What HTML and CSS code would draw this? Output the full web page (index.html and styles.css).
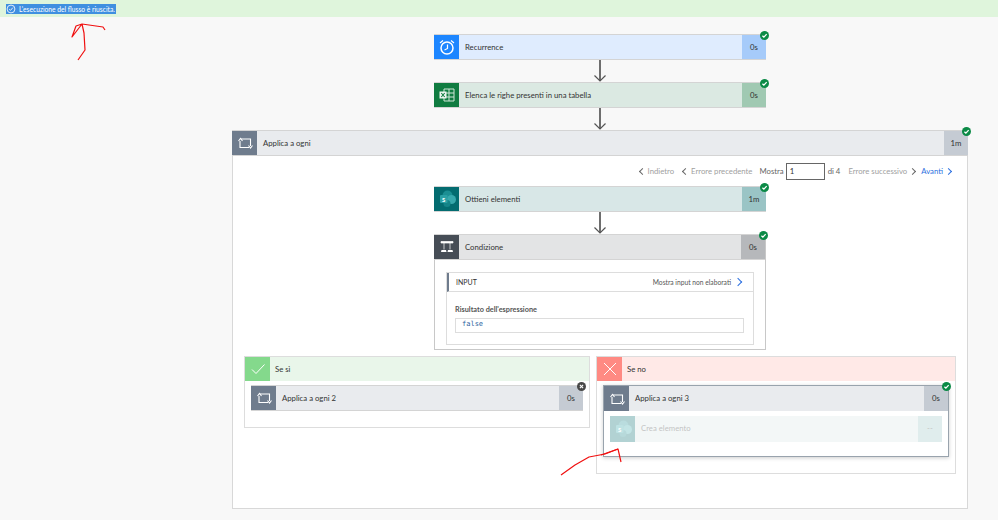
FILE: index.html
```html
<!DOCTYPE html>
<html lang="en">
<head>
<meta charset="UTF-8">
<meta name="viewport" content="width=device-width, initial-scale=1.0">
<title>Esecuzione del flusso</title>
<link rel="stylesheet" href="styles.css">
</head>
<body>
<svg class="defs" width="0" height="0">
  <symbol id="ok" viewBox="0 0 10 10"><circle cx="5" cy="5" r="5" fill="#0b8a46"/><path d="M2.700 5.200 4.300 6.800 7.400 3.400" fill="none" stroke="#fff" stroke-width="1.400"/></symbol>
  <symbol id="loop" viewBox="0 0 24 24"><path d="M8 8H17.500V15M16 16.500H7V10" fill="none" stroke="#fff" stroke-width="1.100"/><path d="M5.500 10 7.500 7.500 9.500 10M15.500 14.500 17.500 17 19.500 14.500" fill="none" stroke="#fff" stroke-width="1.100"/></symbol>
  <symbol id="sp" viewBox="0 0 24 24"><circle cx="12.500" cy="8.500" r="5" fill="#1b8f93"/><circle cx="16.500" cy="12.500" r="4.500" fill="#37a8ac"/><circle cx="12" cy="16.500" r="3.500" fill="#148488"/><rect x="5" y="8" width="7.500" height="8" rx="1" fill="#2aa0a4"/></symbol>
  <symbol id="down" viewBox="0 0 14 22"><path d="M7 0V21" stroke="#6e6e6e" stroke-width="2" fill="none"/><path d="M1.500 15.500 7 21 12.500 15.500" stroke="#555" stroke-width="1.200" fill="none"/></symbol>
</svg>

<div class="banner">
  <span class="selected">
    <svg class="banner-ico" viewBox="0 0 12 12"><circle cx="6" cy="6" r="4.700" fill="none" stroke="#fff" stroke-width="1"/><path d="M3.800 6.200 5.400 7.600 8.200 4.400" fill="none" stroke="#fff" stroke-width="1"/></svg>
    L'esecuzione del flusso è riuscita.
  </span>
</div>

<div class="flow">
  <div class="card card-blue">
    <div class="ico">
      <svg viewBox="0 0 24 24"><circle cx="12" cy="13" r="6" fill="none" stroke="#fff" stroke-width="1.500"/><path d="M12.500 9.500V13.500L9.500 15M5 8 8 5.500M19 8 16 5.500" fill="none" stroke="#fff" stroke-width="1.200"/></svg>
    </div>
    <div class="name">Recurrence</div>
    <div class="time">0s</div>
    <svg class="badge"><use href="#ok"/></svg>
  </div>
  <svg class="arrow"><use href="#down"/></svg>

  <div class="card card-green">
    <div class="ico">
      <svg viewBox="0 0 24 24"><path d="M9 6H19V18H9Z M9 10H19M9 14H19M14 6V18" fill="none" stroke="#cfe6d8" stroke-width="1"/><rect x="4.500" y="8.500" width="7" height="7" fill="#eef6f1"/><path d="M6.300 10 9.700 14M9.700 10 6.300 14" stroke="#107c41" stroke-width="1.100"/></svg>
    </div>
    <div class="name">Elenca le righe presenti in una tabella</div>
    <div class="time">0s</div>
    <svg class="badge"><use href="#ok"/></svg>
  </div>
  <svg class="arrow"><use href="#down"/></svg>

  <div class="scope">
    <div class="card card-grey card-wide">
      <div class="ico"><svg viewBox="0 0 24 24"><use href="#loop"/></svg></div>
      <div class="name">Applica a ogni</div>
      <div class="time">1m</div>
      <svg class="badge"><use href="#ok"/></svg>
    </div>

    <div class="pager">
      <span class="pg pg-back"><i class="chev chev-l"></i>Indietro</span>
      <span class="pg pg-prev"><i class="chev chev-l"></i>Errore precedente</span>
      <span class="pg-show">Mostra</span>
      <input class="pg-input" type="text" value="1">
      <span class="pg-show">di 4</span>
      <span class="pg pg-succ">Errore successivo<i class="chev chev-r"></i></span>
      <span class="pg pg-next">Avanti<i class="chev chev-r chev-blue"></i></span>
    </div>

    <div class="card card-teal">
      <div class="ico"><svg viewBox="0 0 24 24"><use href="#sp"/><text x="8.700" y="14.500" class="sp-s">S</text></svg></div>
      <div class="name">Ottieni elementi</div>
      <div class="time">1m</div>
      <svg class="badge"><use href="#ok"/></svg>
    </div>
    <svg class="arrow"><use href="#down"/></svg>

    <div class="cond">
      <div class="card card-dark">
        <div class="ico">
          <svg viewBox="0 0 24 24"><path d="M6 6.500H18V8H6ZM9 8V14.500M15 8V14.500" fill="#fff" stroke="#fff" stroke-width=".7"/><path d="M6.500 15H11L11.500 17H6ZM13 15H17.500L18 17H12.500Z" fill="#fff"/></svg>
        </div>
        <div class="name">Condizione</div>
        <div class="time">0s</div>
        <svg class="badge"><use href="#ok"/></svg>
      </div>
      <div class="input-box">
        <div class="input-head">
          <span>INPUT</span>
          <span class="raw">Mostra input non elaborati<i class="chev chev-r chev-blue chev-big"></i></span>
        </div>
        <div class="input-body">
          <div class="result-label">Risultato dell'espressione</div>
          <div class="result-value">false</div>
        </div>
      </div>
    </div>

    <div class="branches">
      <div class="branch branch-yes">
        <div class="branch-head">
          <div class="ico"><svg viewBox="0 0 24 24"><path d="M6 12.500 10 16.500 18.500 7.500" fill="none" stroke="#fff" stroke-width="1"/></svg></div>
          <div class="name">Se sì</div>
        </div>
        <div class="card card-grey">
          <div class="ico"><svg viewBox="0 0 24 24"><use href="#loop"/></svg></div>
          <div class="name">Applica a ogni 2</div>
          <div class="time">0s</div>
          <svg class="badge" viewBox="0 0 10 10"><circle cx="5" cy="5" r="5" fill="#484848"/><path d="M3.200 3.200 6.800 6.800M6.800 3.200 3.200 6.800" stroke="#fff" stroke-width="1.200"/></svg>
        </div>
      </div>

      <div class="branch branch-no">
        <div class="branch-head">
          <div class="ico"><svg viewBox="0 0 24 24"><path d="M6 6 18 18M18 6 6 18" fill="none" stroke="#fff" stroke-width="1"/></svg></div>
          <div class="name">Se no</div>
        </div>
        <div class="loop3">
          <div class="card card-grey">
            <div class="ico"><svg viewBox="0 0 24 24"><use href="#loop"/></svg></div>
            <div class="name">Applica a ogni 3</div>
            <div class="time">0s</div>
            <svg class="badge"><use href="#ok"/></svg>
          </div>
          <div class="card card-teal card-faded">
            <div class="ico"><svg viewBox="0 0 24 24"><use href="#sp"/><text x="8.700" y="14.500" class="sp-s">S</text></svg></div>
            <div class="name">Crea elemento</div>
            <div class="time">--</div>
          </div>
        </div>
      </div>
    </div>
  </div>
</div>

<!-- red marks drawn on the screenshot -->
<svg class="marks" viewBox="0 0 998 520">
  <path d="M78 60 85 50 84 33 82 24 76 26 72 37 82 24 103 27 105 30" />
  <path d="M561 475 575 465 589 457 605 454 618 449 621 462" />
  <path d="M601 455 618 449" />
</svg>
</body>
</html>
```

FILE: styles.css
```css
* {
  box-sizing: border-box;
}
body {
  margin: 0;
  width: 998px;
  height: 520px;
  overflow: hidden;
  background-color: #f8f8f8;
  font-family: Lato, Arial, sans-serif;
  font-size: 7.750px;
  color: #333;
}
.defs {
  display: block;
  height: 0;
}
.sp-s {
  font-family: Lato, sans-serif;
  font-size: 6px;
  font-weight: 700;
  fill: #fff;
  text-anchor: middle;
}

.banner {
  height: 17px;
  padding: 4px 0 0 6px;
  background-color: #dff5dc;
}
.selected {
  display: inline-flex;
  align-items: center;
  gap: 3px;
  height: 10px;
  padding-right: 1px;
  background-color: #3f8fe0;
  color: #fff;
  font-size: 6.700px;
  line-height: 10px;
  white-space: nowrap;
  vertical-align: top;
}
.banner-ico {
  width: 10px;
  height: 10px;
  flex: none;
}

.flow {
  display: flex;
  flex-direction: column;
  align-items: center;
  width: 736px;
  margin: 17px 0 0 232px;
}

.card {
  position: relative;
  display: flex;
  align-items: stretch;
  flex: none;
  width: 332px;
  height: 26px;
  border: 1px solid #d4d4d4;
  border-left: 0;
  border-right: 0;
}
.ico {
  display: flex;
  align-items: center;
  justify-content: center;
  flex: none;
  width: 25px;
}
.ico svg {
  width: 24px;
  height: 24px;
}
.name {
  flex: 1;
  padding-left: 6px;
  line-height: 24px;
  white-space: nowrap;
}
.time {
  flex: none;
  width: 24px;
  line-height: 24px;
  text-align: center;
}
.badge {
  position: absolute;
  top: -4px;
  right: -3px;
  width: 9px;
  height: 9px;
}

.card-blue { background-color: #dfecfe; }
.card-blue .ico { background-color: #1d86ff; }
.card-blue .time { background-color: #a6cbfa; }
.card-green { background-color: #dbe9e2; }
.card-green .ico { background-color: #107c41; }
.card-green .time { background-color: #a0c9b2; }
.card-grey { background-color: #e9ebee; }
.card-grey .ico { background-color: #6f7c8d; }
.card-grey .time { background-color: #c5cbd3; }
.card-teal { background-color: #d8e7e7; }
.card-teal .ico { background-color: #036c70; }
.card-teal .time { background-color: #9ac4c5; }
.card-dark { background-color: #e3e4e5; }
.card-dark .ico { background-color: #464d56; }
.card-dark .time { background-color: #b6b8bb; }

.arrow {
  display: block;
  flex: none;
  width: 14px;
  height: 22px;
}

.scope {
  display: flex;
  flex-direction: column;
  align-items: center;
  width: 736px;
  height: 379px;
  background-color: #fff;
  border: 1px solid #d8d8d8;
  border-top: 0;
}
.card-wide {
  width: 736px;
  margin: 0 -1px;
}
.pager {
  display: flex;
  align-items: center;
  justify-content: flex-end;
  width: 100%;
  height: 30px;
  padding-right: 14px;
  color: #a0a0a0;
}
.pg {
  display: flex;
  align-items: center;
  gap: 3px;
}
.pg-back { margin-right: 7px; }
.pg-prev { margin-right: 7px; }
.pg-succ { margin: 0 4px 0 8px; }
.pg-show {
  color: #666;
}
.pg-input {
  width: 39px;
  height: 17px;
  margin: 0 3px 0 2px;
  padding: 0 3px;
  border: 1px solid #666;
  font: inherit;
  color: #333;
}
.pg-next {
  color: #2b6fe0;
}
.chev {
  display: inline-block;
  width: 5px;
  height: 5px;
  border-top: 1.200px solid #666;
  border-left: 1.200px solid #666;
}
.chev-l {
  transform: rotate(-45deg);
  margin-left: 2px;
}
.chev-r {
  transform: rotate(135deg);
  margin-right: 2px;
}
.chev-blue {
  border-color: #2b6fe0;
}
.chev-big {
  width: 6px;
  height: 6px;
  margin: 0 12px 0 4px;
}

.cond {
  flex: none;
  width: 332px;
  height: 116px;
  background-color: #fff;
  border: 1px solid #c8c8c8;
  border-top: 0;
}
.cond .card {
  width: 331px;
  margin: 0 -1px 0 -1px;
}
.input-box {
  width: 308px;
  height: 73px;
  margin: 12px 0 0 11px;
  border: 1px solid #ddd;
}
.input-head {
  display: flex;
  align-items: center;
  justify-content: space-between;
  height: 19px;
  padding-left: 7px;
  border-left: 2px solid #6f7c8d;
  border-bottom: 1px solid #ddd;
  font-size: 7px;
}
.raw {
  display: flex;
  align-items: center;
  font-size: 6.700px;
  color: #555;
}
.input-body {
  padding: 12px 9px 0 8px;
}
.result-label {
  font-size: 7.300px;
  font-weight: 700;
  color: #555;
  line-height: 11px;
}
.result-value {
  height: 15px;
  margin-top: 3px;
  padding: 1px 0 0 6px;
  border: 1px solid #ddd;
  font-family: "DejaVu Sans Mono", monospace;
  font-size: 7px;
  line-height: 9px;
  color: #2b5f9e;
}

.branches {
  display: flex;
  align-items: flex-start;
  gap: 6px;
  width: 100%;
  padding-left: 11px;
  margin-top: 6px;
}
.branch {
  flex: none;
  background-color: #fff;
  border: 1px solid #ddd;
}
.branch-yes {
  width: 346px;
  height: 72px;
}
.branch-no {
  width: 360px;
  height: 118px;
}
.branch-head {
  display: flex;
  height: 24px;
}
.branch-yes .branch-head { background-color: #e9f6ea; }
.branch-yes .branch-head .ico { background-color: #84d98c; }
.branch-no .branch-head { background-color: #ffe9e7; }
.branch-no .branch-head .ico { background-color: #ff8a83; }
.branch-head .name {
  padding-left: 5px;
}
.branch .card {
  margin: 4px 0 0 6px;
}
.loop3 {
  width: 346px;
  height: 72px;
  margin: 4px 0 0 6px;
  border: 1px solid #99a3ad;
  box-shadow: 0 1px 4px rgba(0, 0, 0, 0.2);
  background-color: #fff;
}
.loop3 .card {
  width: 344px;
  margin: 0;
  height: 25px;
  border: 0;
}
.loop3 .card-faded {
  width: 332px;
  height: 26px;
  margin: 5px 0 0 6px;
  opacity: 0.3;
}

.marks {
  position: absolute;
  top: 0;
  left: 0;
  width: 998px;
  height: 520px;
  pointer-events: none;
}
.marks path {
  fill: none;
  stroke: #f01010;
  stroke-width: 1.200;
  stroke-linejoin: round;
}
```
